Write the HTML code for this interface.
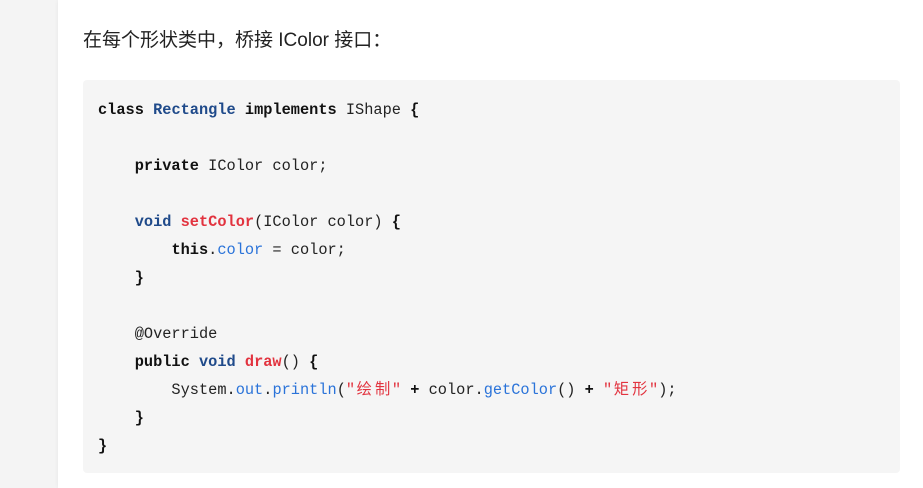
<!DOCTYPE html>
<html><head><meta charset="utf-8"><style>
html,body{margin:0;padding:0;width:923px;height:488px;overflow:hidden;background:#f4f4f4;}
.panel{position:absolute;left:58px;top:0;width:865px;height:488px;background:#fff;box-shadow:0 0 4px rgba(0,0,0,0.06);}
.h{position:absolute;left:83px;top:27px;font:19px "Liberation Sans","Noto Sans CJK SC",sans-serif;color:#222;line-height:28px;}
.code{position:absolute;left:83px;top:80px;width:817px;height:393px;background:#f5f5f5;border-radius:4px;}
pre{margin:0;position:absolute;left:15px;top:16px;font:15.3px "Liberation Mono","Noto Sans CJK SC",monospace;line-height:28px;color:#222;}
.k{font-weight:bold;color:#111}
.b{font-weight:bold;color:#1f4a8a}
.f{font-weight:bold;color:#e2333f}
.p{color:#2a73d9}
.s{color:#e2333f}
.c{display:inline-block;width:18.4px;text-align:center}
</style></head><body>
<div class="panel"></div>
<div class="h">在每个形状类中，桥接 IColor 接口：</div>
<div class="code"><pre><span class="k">class</span> <span class="b">Rectangle</span> <span class="k">implements</span> IShape <span class="k">{</span>

    <span class="k">private</span> IColor color;

    <span class="b">void</span> <span class="f">setColor</span>(IColor color) <span class="k">{</span>
        <span class="k">this</span>.<span class="p">color</span> = color;
    <span class="k">}</span>

    @Override
    <span class="k">public</span> <span class="b">void</span> <span class="f">draw</span>() <span class="k">{</span>
        System.<span class="p">out</span>.<span class="p">println</span>(<span class="s">"<span class="c">绘</span><span class="c">制</span>"</span> <span class="k">+</span> color.<span class="p">getColor</span>() <span class="k">+</span> <span class="s">"<span class="c">矩</span><span class="c">形</span>"</span>);
    <span class="k">}</span>
<span class="k">}</span></pre></div>
</body></html>
